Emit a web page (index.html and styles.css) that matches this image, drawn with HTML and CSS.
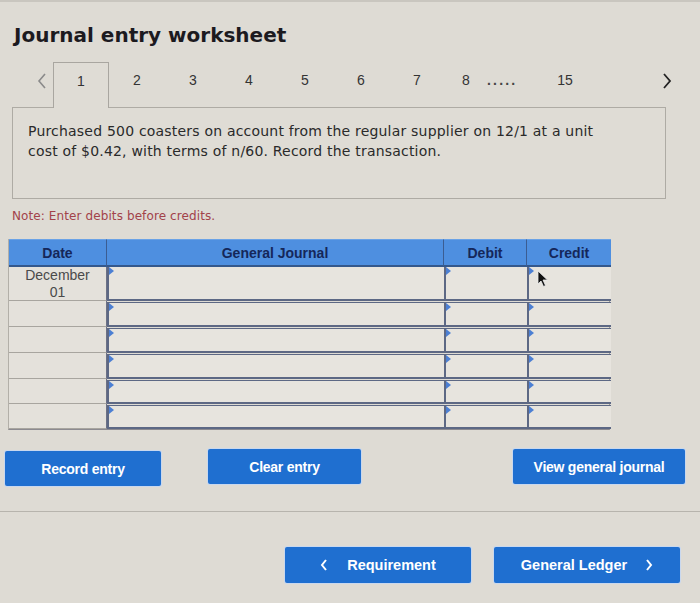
FILE: index.html
```html
<!DOCTYPE html>
<html>
<head>
<meta charset="utf-8">
<link rel="stylesheet" href="styles.css">
</head>
<body>
<div class="page">
  <h1 class="title">Journal entry worksheet</h1>

  <div class="tabs">
    <span class="arrow prev">
      <svg width="10" height="16" viewBox="0 0 10 16"><path d="M8 1 L2 8 L8 15" fill="none" stroke="#8a8a8a" stroke-width="1.6"/></svg>
    </span>
    <span class="tab active">1</span>
    <span class="tab">2</span>
    <span class="tab">3</span>
    <span class="tab">4</span>
    <span class="tab">5</span>
    <span class="tab">6</span>
    <span class="tab">7</span>
    <span class="tab narrow">8</span>
    <span class="dots">.....</span>
    <span class="tab wide">15</span>
    <span class="spacer"></span>
    <span class="arrow next">
      <svg width="10" height="16" viewBox="0 0 10 16"><path d="M2 1 L8 8 L2 15" fill="none" stroke="#222" stroke-width="1.8"/></svg>
    </span>
  </div>

  <div class="question">
    <p>Purchased 500 coasters on account from the regular supplier on 12/1 at a unit cost of $0.42, with terms of n/60. Record the transaction.</p>
  </div>

  <p class="note">Note: Enter debits before credits.</p>

  <div class="journal">
    <div class="hcell">Date</div>
    <div class="hcell">General Journal</div>
    <div class="hcell">Debit</div>
    <div class="hcell">Credit</div>

    <div class="dcell first">December<br>01</div>
    <div class="icell first"></div>
    <div class="icell first"></div>
    <div class="icell first cursor-cell">
      <svg class="cursor" width="12" height="18" viewBox="0 0 12 18"><path d="M1 1 L1 14 L4 11 L6.5 16.5 L8.5 15.5 L6 10 L10.5 10 Z" fill="#111" stroke="#eee" stroke-width="0.8"/></svg>
    </div>

    <div class="dcell"></div><div class="icell"></div><div class="icell"></div><div class="icell"></div>
    <div class="dcell"></div><div class="icell"></div><div class="icell"></div><div class="icell"></div>
    <div class="dcell"></div><div class="icell"></div><div class="icell"></div><div class="icell"></div>
    <div class="dcell"></div><div class="icell"></div><div class="icell"></div><div class="icell"></div>
    <div class="dcell"></div><div class="icell"></div><div class="icell"></div><div class="icell"></div>
  </div>

  <div class="actions">
    <button class="btn record">Record entry</button>
    <button class="btn clear">Clear entry</button>
    <span class="spacer"></span>
    <button class="btn view">View general journal</button>
  </div>

  <div class="bottom">
    <button class="btn nav req">
      <svg class="chev" width="8" height="12" viewBox="0 0 8 12"><path d="M6 1 L2 6 L6 11" fill="none" stroke="#fff" stroke-width="2"/></svg>
      <span>Requirement</span>
    </button>
    <button class="btn nav ledger">
      <span>General Ledger</span>
      <svg class="chev right" width="8" height="12" viewBox="0 0 8 12"><path d="M2 1 L6 6 L2 11" fill="none" stroke="#fff" stroke-width="2"/></svg>
    </button>
  </div>
</div>
</body>
</html>
```

FILE: styles.css
```css
* { box-sizing: border-box; }

html, body {
  margin: 0;
  padding: 0;
  background: #dedbd4;
}

.page {
  width: 700px;
  height: 603px;
  border-top: 2px solid #c9c6bf;
  font-family: "DejaVu Sans", Verdana, sans-serif;
  position: relative;
  overflow: hidden;
}

.title {
  margin: 0;
  padding: 20px 0 0 14px;
  font-size: 20px;
  line-height: 26px;
  font-weight: bold;
  color: #1c1a1f;
}

.tabs {
  display: flex;
  align-items: stretch;
  height: 45px;
  margin-top: 14px;
  padding-left: 30px;
  font-family: "Liberation Sans", Arial, sans-serif;
  font-size: 14px;
  color: #333;
  position: relative;
  z-index: 1;
}

.arrow {
  display: flex;
  align-items: center;
  justify-content: center;
  width: 23px;
  padding-bottom: 8px;
}

.tab {
  width: 56px;
  display: flex;
  justify-content: center;
  padding-top: 10px;
}

.tab.active {
  border: 1px solid #a9a6a0;
  border-bottom: none;
  background: #dfdcd5;
  margin-bottom: -1px;
  height: 46px;
}

.tab.narrow { width: 42px; }
.tab.wide { width: 74px; }

.dots {
  width: 41px;
  padding-top: 10px;
  font-weight: bold;
  letter-spacing: 2.2px;
  color: #444;
}

.spacer { flex: 1; }

.arrow.next { margin-right: 27px; width: 12px; }

.question {
  margin-left: 12px;
  width: 654px;
  height: 92px;
  border: 1px solid #aeaba4;
  background: #dfdcd5;
  padding: 13px 15px 0 15px;
}

.question p {
  margin: 0;
  max-width: 590px;
  font-size: 14px;
  letter-spacing: 0.2px;
  line-height: 20px;
  color: #2a2a2a;
}

.note {
  margin: 9px 0 0 12px;
  font-size: 12px;
  letter-spacing: 0.1px;
  line-height: 16px;
  color: #a2424a;
}

.journal {
  margin: 15px 0 0 8px;
  width: 602px;
  display: grid;
  grid-template-columns: 98px 337px 83px 84px;
  grid-template-rows: 28px 34px 26px 26px 26px 25px 25px;
  border-right: 1px solid #9e9b95;
  border-left: 1px solid #b2afa8;
  border-bottom: 1px solid #8c8a90;
  font-family: "Liberation Sans", Arial, sans-serif;
}

.hcell {
  background: #4e8fe0;
  color: #15275a;
  font-weight: bold;
  font-size: 14px;
  display: flex;
  align-items: center;
  justify-content: center;
  border-right: 1px solid #3b5d92;
  border-bottom: 2px solid #34588c;
  border-top: 1px solid #6aa2e6;
}

.hcell:nth-child(4) { border-right: none; }

.dcell {
  background: #e4e1db;
  border-bottom: 1px solid #a8a59f;
  border-right: 1px solid #6c7186;
  font-size: 14px;
  line-height: 17px;
  color: #4a4a4a;
  text-align: center;
}

.icell {
  position: relative;
  background: #e7e4de;
  border: 2px solid #5d6884;
  border-top-width: 1px;
  border-right: none;
  margin-top: 1px;
}

.icell.first { border-top: none; margin-top: 0; }

.icell::before {
  content: "";
  position: absolute;
  left: 0;
  top: 0;
  border-left: 5px solid #4c7fd3;
  border-top: 4px solid transparent;
  border-bottom: 4px solid transparent;
}

.cursor {
  position: absolute;
  left: 8px;
  top: 3px;
}

.actions {
  display: flex;
  align-items: flex-start;
  margin-top: 19px;
  padding: 0 15px 0 5px;
}

.btn {
  border: none;
  background: #1f6fd0;
  color: #fff;
  font-family: "Liberation Sans", Arial, sans-serif;
  font-weight: bold;
  font-size: 14px;
  letter-spacing: -0.25px;
  border-radius: 2px;
  height: 35px;
  padding: 0;
  box-shadow: 0 0 0 1px #c9d8ee;
}

.btn.record { width: 156px; margin-top: 2px; }
.btn.clear { width: 153px; margin-left: 47px; }
.btn.view { width: 172px; }

.bottom {
  margin-top: 25px;
  border-top: 1px solid #b7b4ad;
  display: flex;
  justify-content: flex-end;
  gap: 23px;
  padding: 35px 20px 0 0;
}

.btn.nav {
  width: 186px;
  height: 36px;
  display: flex;
  align-items: center;
  justify-content: center;
  font-size: 14.5px;
  letter-spacing: 0;
}

.chev { margin-right: 19px; }
.chev.right { margin-right: 0; margin-left: 18px; }
```
